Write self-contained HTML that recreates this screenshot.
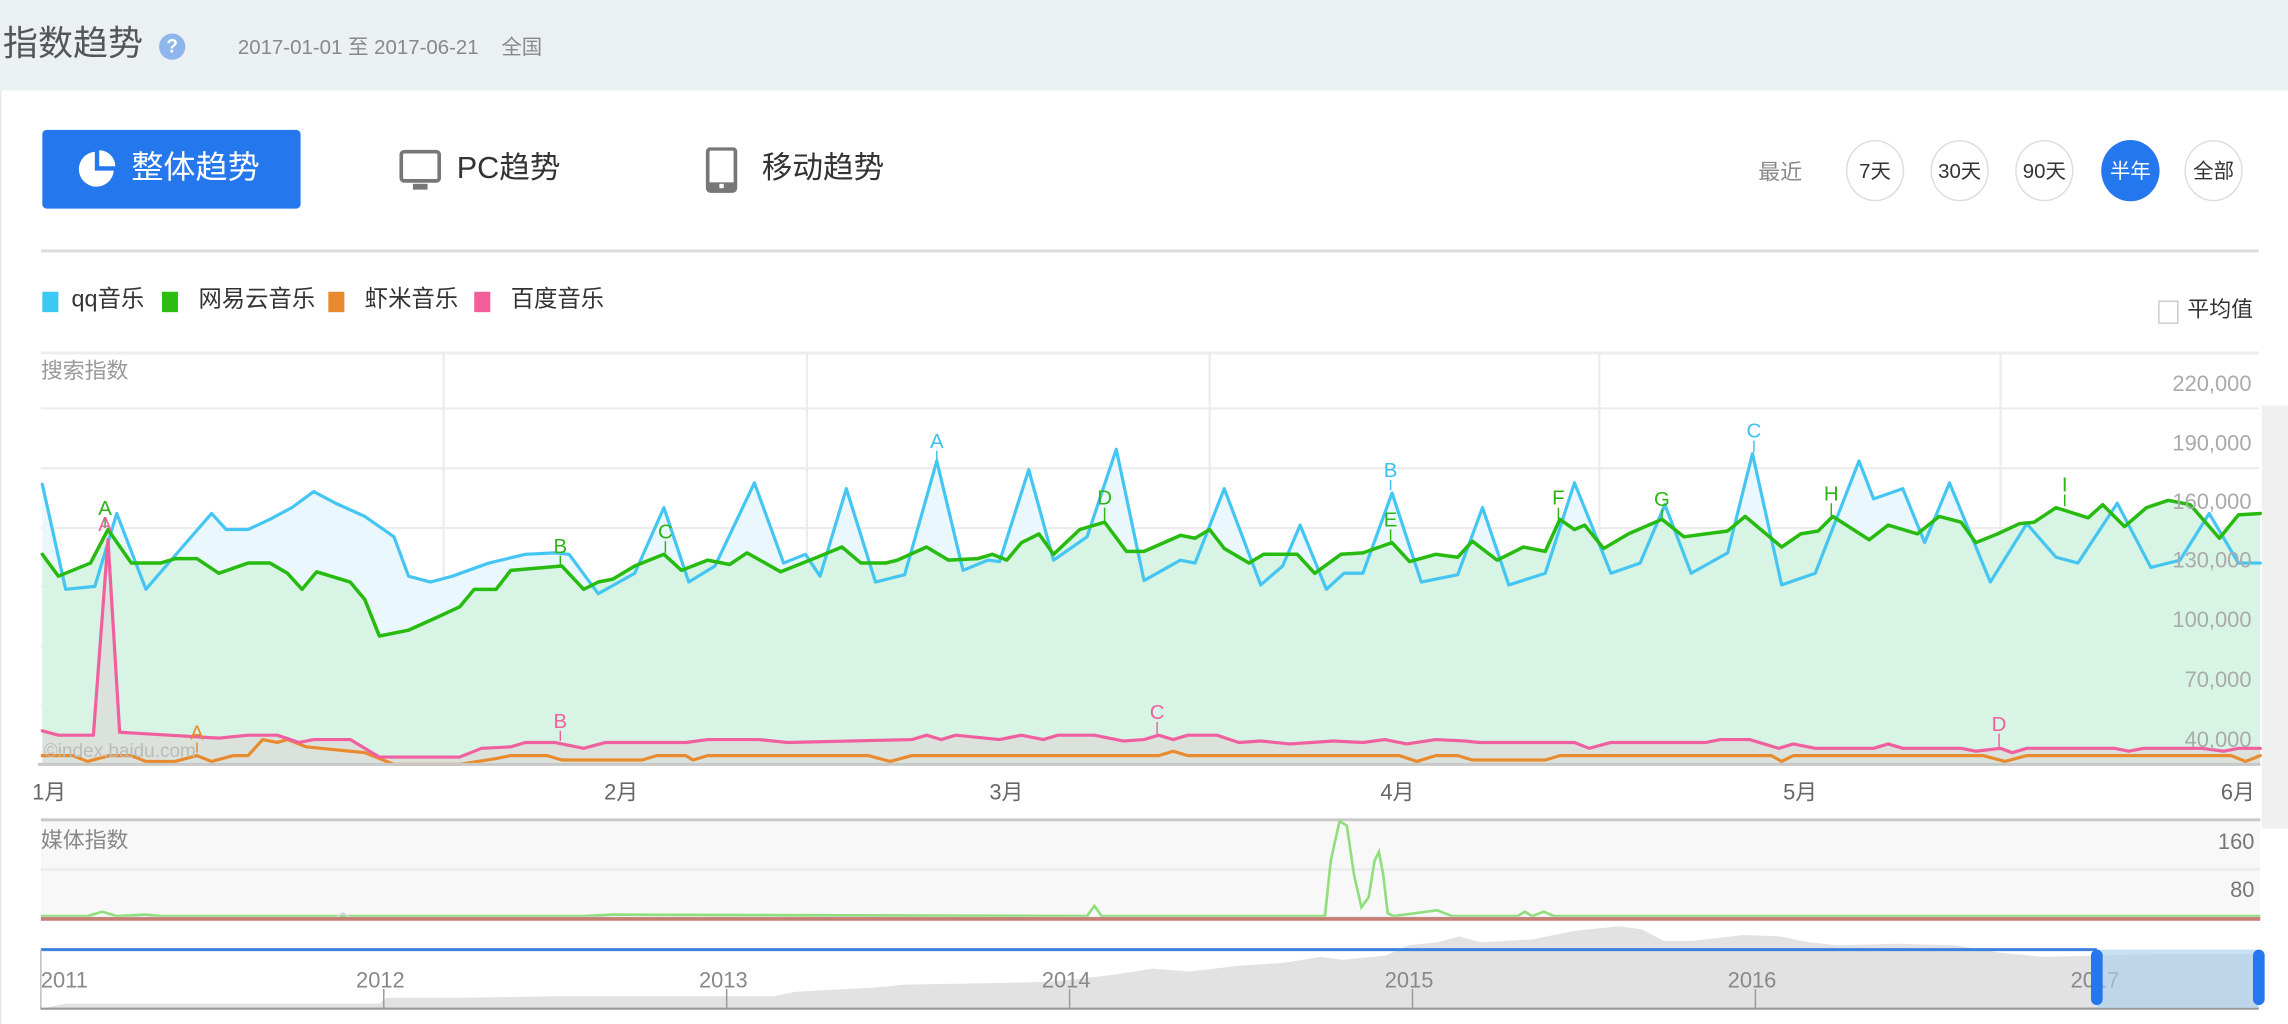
<!DOCTYPE html>
<html><head><meta charset="utf-8">
<style>
html,body{margin:0;padding:0;background:#fff;overflow:hidden}
body{width:2288px;height:1024px;position:relative}
#c{position:absolute;left:0;top:0;width:1568px;height:702px;transform:scale(1.45918,1.4587);transform-origin:0 0;font-family:"Liberation Sans","Noto Sans CJK SC",sans-serif;}
.t{position:absolute;white-space:nowrap;line-height:1}
.circ{position:absolute;width:40px;height:42px;border:1px solid #ddd;border-radius:50%;box-sizing:border-box;text-align:center;line-height:40px;font-size:14px;color:#333;top:96px;background:#fff}
</style></head><body>
<div id="c">
<div style="position:absolute;left:0;top:0;width:1568px;height:62px;background:#ebf0f3"></div>
<div style="position:absolute;left:0;top:62px;width:1px;height:640px;background:#e6eaec"></div>
<div class="t" style="left:2px;top:19px;font-size:24px;color:#555">指数趋势</div>
<div style="position:absolute;left:109px;top:23px;width:18px;height:18px;border-radius:50%;background:#8fb6ec;color:#fff;font-size:13px;font-weight:bold;text-align:center;line-height:18px">?</div>
<div class="t" style="left:163px;top:25px;font-size:14px;color:#888">2017-01-01 至 2017-06-21 &nbsp;&nbsp;&nbsp;全国</div>

<div style="position:absolute;left:29px;top:89px;width:177px;height:54px;background:#2577ee;border-radius:3px"></div>
<svg style="position:absolute;left:52px;top:102px" width="28" height="28" viewBox="0 0 28 28"><path d="M13 2 A12 12 0 1 0 26 15 L13 15 Z" fill="#fff"/><path d="M16 1 L16 12 L27 12 A11 11 0 0 0 16 1Z" fill="#fff"/></svg>
<div class="t" style="left:90px;top:104px;font-size:22px;color:#fff">整体趋势</div>
<svg style="position:absolute;left:273px;top:102px" width="30" height="30" viewBox="0 0 30 30"><rect x="2" y="2" width="26" height="20" rx="2" fill="none" stroke="#777" stroke-width="2.5"/><rect x="10" y="24" width="10" height="4" fill="#777"/></svg>
<div class="t" style="left:313px;top:105px;font-size:21px;color:#333">PC趋势</div>
<svg style="position:absolute;left:483px;top:101px" width="24" height="32" viewBox="0 0 24 32"><rect x="2" y="1" width="19" height="29" rx="2" fill="none" stroke="#777" stroke-width="2.5"/><rect x="2" y="24" width="19" height="6" fill="#777"/><rect x="10" y="25" width="3" height="3" fill="#fff"/></svg>
<div class="t" style="left:522px;top:105px;font-size:21px;color:#333">移动趋势</div>

<div class="t" style="left:1205px;top:111px;font-size:15px;color:#888">最近</div>
<div class="circ" style="left:1265px">7天</div>
<div class="circ" style="left:1323px">30天</div>
<div class="circ" style="left:1381px">90天</div>
<div class="circ" style="left:1440px;background:#2577ee;border-color:#2577ee;color:#fff">半年</div>
<div class="circ" style="left:1497px">全部</div>

<div style="position:absolute;left:28px;top:171px;width:1520px;height:2px;background:#dddddd"></div>

<div style="position:absolute;left:29px;top:200px;width:11px;height:14px;background:#3cc8f4"></div>
<div class="t" style="left:49px;top:198px;font-size:16px;color:#333">qq音乐</div>
<div style="position:absolute;left:111px;top:200px;width:11px;height:14px;background:#2cbe12"></div>
<div class="t" style="left:136px;top:198px;font-size:16px;color:#333">网易云音乐</div>
<div style="position:absolute;left:225px;top:200px;width:11px;height:14px;background:#e88b2e"></div>
<div class="t" style="left:250px;top:198px;font-size:16px;color:#333">虾米音乐</div>
<div style="position:absolute;left:325px;top:200px;width:11px;height:14px;background:#f25e9c"></div>
<div class="t" style="left:350px;top:198px;font-size:16px;color:#333">百度音乐</div>

<div style="position:absolute;left:1479px;top:206px;width:12px;height:14px;border:1px solid #ccc;background:#fff"></div>
<div class="t" style="left:1499px;top:205px;font-size:15px;color:#333">平均值</div>

<svg style="position:absolute;left:0;top:0" width="1568" height="702" viewBox="0 0 1568 702">
<rect x="1550" y="278" width="18" height="290" fill="#f0f0f0"/>
<line x1="28" y1="242" x2="1548" y2="242" stroke="#eeeeee" stroke-width="2"/>
<g stroke="#ececec" stroke-width="1.5">
<line x1="28" y1="280" x2="1548" y2="280"/><line x1="28" y1="321" x2="1548" y2="321"/><line x1="28" y1="362" x2="1548" y2="362"/><line x1="28" y1="402" x2="1548" y2="402"/><line x1="28" y1="443" x2="1548" y2="443"/><line x1="28" y1="484" x2="1548" y2="484"/>
<line x1="304" y1="242" x2="304" y2="524"/><line x1="553" y1="242" x2="553" y2="524"/><line x1="829" y1="242" x2="829" y2="524"/><line x1="1096" y1="242" x2="1096" y2="524"/><line x1="1371" y1="242" x2="1371" y2="524"/>
</g>
<polygon fill="#eaf8fd" points="29,524 29,332 45,404 65,402 80,352 100,404 125,375 145,352 155,363 170,363 185,356 200,348 215,337 230,345 250,354 270,368 280,395 295,399 310,395 335,386 360,380 380,379 390,380 410,407 435,393 455,348 472,399 490,388 517,331 537,386 552,380 562,395 580,335 600,399 620,394 642,316 660,391 677,384 685,385 705,322 722,384 745,368 765,308 784,398 809,384 819,386 839,335 864,401 879,388 891,360 909,404 921,393 934,393 954,338 974,399 999,394 1016,348 1034,401 1059,393 1079,331 1104,393 1124,386 1141,346 1159,393 1184,379 1201,311 1221,401 1244,393 1274,316 1284,342 1304,335 1319,372 1336,331 1364,399 1389,359 1409,382 1424,386 1451,345 1474,389 1494,384 1514,352 1534,386 1549,386 1549,524"/>
<polygon fill="#d6f3e3" fill-opacity="0.95" points="29,524 29,380 40,395 62,386 74,363 90,386 110,386 120,383 135,383 150,393 170,386 185,386 197,393 207,404 217,392 240,399 250,411 260,436 280,432 300,423 315,416 325,404 340,404 350,391 385,388 400,404 410,399 420,397 435,388 455,380 467,391 485,384 500,387 512,379 535,392 560,382 577,375 590,386 607,386 615,384 635,375 650,384 670,383 680,380 690,384 700,372 712,366 722,380 740,363 757,358 772,378 784,378 809,367 819,369 829,363 839,376 856,386 866,380 889,380 901,393 919,380 934,379 954,372 966,385 984,380 999,382 1009,371 1026,384 1044,375 1059,378 1069,356 1079,363 1086,360 1099,376 1116,366 1139,356 1154,368 1169,366 1184,364 1196,354 1221,375 1234,366 1246,364 1256,354 1281,370 1294,360 1314,366 1329,354 1344,358 1354,372 1369,366 1384,359 1394,358 1409,348 1431,355 1441,346 1456,361 1471,348 1486,343 1501,346 1521,369 1534,353 1549,352 1549,524"/>
<polygon fill="#dbe2dc" points="29,524 29,501 40,504 64,504 74,370 82,502 150,506 170,504 190,504 205,509 215,507 240,507 260,519 315,519 330,513 350,512 360,509 380,509 400,513 415,509 470,509 485,507 520,507 540,509 625,507 635,504 645,507 655,504 685,507 700,504 715,507 725,504 750,504 770,508 784,507 794,504 804,507 814,504 834,504 849,509 864,508 884,510 914,508 934,509 949,507 964,510 984,507 1004,508 1014,509 1079,509 1089,513 1104,509 1169,509 1179,507 1199,507 1219,513 1229,510 1244,513 1284,513 1294,510 1304,513 1344,513 1354,515 1371,513 1379,516 1389,513 1449,513 1459,515 1469,513 1509,513 1524,515 1534,513 1549,513 1549,524"/>
<g fill="none" stroke-width="2.2" stroke-linejoin="round" stroke-linecap="round">
<polyline stroke="#45c6f2" points="29,332 45,404 65,402 80,352 100,404 125,375 145,352 155,363 170,363 185,356 200,348 215,337 230,345 250,354 270,368 280,395 295,399 310,395 335,386 360,380 380,379 390,380 410,407 435,393 455,348 472,399 490,388 517,331 537,386 552,380 562,395 580,335 600,399 620,394 642,316 660,391 677,384 685,385 705,322 722,384 745,368 765,308 784,398 809,384 819,386 839,335 864,401 879,388 891,360 909,404 921,393 934,393 954,338 974,399 999,394 1016,348 1034,401 1059,393 1079,331 1104,393 1124,386 1141,346 1159,393 1184,379 1201,311 1221,401 1244,393 1274,316 1284,342 1304,335 1319,372 1336,331 1364,399 1389,359 1409,382 1424,386 1451,345 1474,389 1494,384 1514,352 1534,386 1549,386"/>
<polyline stroke="#e88b2e" points="29,518 50,518 60,522 75,518 90,518 100,522 120,522 135,518 145,522 160,518 170,518 180,507 190,509 197,507 210,512 220,513 240,515 250,516 270,524 315,524 340,520 350,518 375,518 385,521 440,521 450,518 470,518 475,521 485,518 595,518 610,522 625,518 794,518 804,515 814,518 959,518 971,522 984,518 999,518 1009,521 1059,521 1069,518 1214,518 1221,522 1229,518 1359,518 1374,522 1389,518 1529,518 1539,522 1549,518"/>
<polyline stroke="#f0609f" points="29,501 40,504 64,504 74,370 82,502 150,506 170,504 190,504 205,509 215,507 240,507 260,519 315,519 330,513 350,512 360,509 380,509 400,513 415,509 470,509 485,507 520,507 540,509 625,507 635,504 645,507 655,504 685,507 700,504 715,507 725,504 750,504 770,508 784,507 794,504 804,507 814,504 834,504 849,509 864,508 884,510 914,508 934,509 949,507 964,510 984,507 1004,508 1014,509 1079,509 1089,513 1104,509 1169,509 1179,507 1199,507 1219,513 1229,510 1244,513 1284,513 1294,510 1304,513 1344,513 1354,515 1371,513 1379,516 1389,513 1449,513 1459,515 1469,513 1509,513 1524,515 1534,513 1549,513"/>
<polyline stroke="#27bb10" stroke-width="2.4" points="29,380 40,395 62,386 74,363 90,386 110,386 120,383 135,383 150,393 170,386 185,386 197,393 207,404 217,392 240,399 250,411 260,436 280,432 300,423 315,416 325,404 340,404 350,391 385,388 400,404 410,399 420,397 435,388 455,380 467,391 485,384 500,387 512,379 535,392 560,382 577,375 590,386 607,386 615,384 635,375 650,384 670,383 680,380 690,384 700,372 712,366 722,380 740,363 757,358 772,378 784,378 809,367 819,369 829,363 839,376 856,386 866,380 889,380 901,393 919,380 934,379 954,372 966,385 984,380 999,382 1009,371 1026,384 1044,375 1059,378 1069,356 1079,363 1086,360 1099,376 1116,366 1139,356 1154,368 1169,366 1184,364 1196,354 1221,375 1234,366 1246,364 1256,354 1281,370 1294,360 1314,366 1329,354 1344,358 1354,372 1369,366 1384,359 1394,358 1409,348 1431,355 1441,346 1456,361 1471,348 1486,343 1501,346 1521,369 1534,353 1549,352"/>
</g>
<line x1="26" y1="524" x2="1549" y2="524" stroke="#c8c8c8" stroke-width="2"/>
<g font-family="Liberation Sans, sans-serif" font-size="14" text-anchor="middle">
<g fill="#2cb514" stroke="#2cb514" stroke-width="1">
<text x="72" y="353" stroke="none">A</text><line x1="72" y1="355" x2="72" y2="362"/>
<text x="384" y="379" stroke="none">B</text><line x1="384" y1="381" x2="384" y2="388"/>
<text x="456" y="369" stroke="none">C</text><line x1="456" y1="371" x2="456" y2="379"/>
<text x="757" y="346" stroke="none">D</text><line x1="757" y1="348" x2="757" y2="357"/>
<text x="953" y="361" stroke="none">E</text><line x1="953" y1="363" x2="953" y2="371"/>
<text x="1068" y="346" stroke="none">F</text><line x1="1068" y1="348" x2="1068" y2="356"/>
<text x="1139" y="347" stroke="none">G</text><line x1="1139" y1="349" x2="1139" y2="356"/>
<text x="1255" y="343" stroke="none">H</text><line x1="1255" y1="345" x2="1255" y2="354"/>
<text x="1415" y="337" stroke="none">I</text><line x1="1415" y1="339" x2="1415" y2="347"/>
</g>
<g fill="#3bbfef" stroke="#3bbfef" stroke-width="1">
<text x="642" y="307" stroke="none">A</text><line x1="642" y1="309" x2="642" y2="316"/>
<text x="953" y="327" stroke="none">B</text><line x1="953" y1="329" x2="953" y2="336"/>
<text x="1202" y="300" stroke="none">C</text><line x1="1202" y1="302" x2="1202" y2="310"/>
</g>
<g fill="#f0609f" stroke="#f0609f" stroke-width="1">
<text x="72" y="364" stroke="none">A</text>
<text x="384" y="499" stroke="none">B</text><line x1="384" y1="501" x2="384" y2="508"/>
<text x="793" y="493" stroke="none">C</text><line x1="793" y1="495" x2="793" y2="503"/>
<text x="1370" y="501" stroke="none">D</text><line x1="1370" y1="503" x2="1370" y2="512"/>
</g>
<g fill="#e88b2e" stroke="#e88b2e"><text x="135" y="507" stroke="none">A</text><line x1="135" y1="509" x2="135" y2="516"/></g>
</g>
<text x="30" y="519" font-family="Liberation Sans, sans-serif" font-size="13" fill="#bbb">©index.baidu.com</text>
<g font-family="Liberation Sans, sans-serif" font-size="15" fill="#aaa" text-anchor="end">
<text x="1543" y="268">220,000</text><text x="1543" y="309">190,000</text><text x="1543" y="349">160,000</text><text x="1543" y="389">130,000</text><text x="1543" y="430">100,000</text><text x="1543" y="471">70,000</text><text x="1543" y="512">40,000</text>
</g>
<g font-family="Liberation Sans, Noto Sans CJK SC, sans-serif" font-size="15" fill="#666">
<text x="22" y="548">1月</text><text x="414" y="548">2月</text><text x="678" y="548">3月</text><text x="946" y="548">4月</text><text x="1222" y="548">5月</text><text x="1522" y="548">6月</text>
</g>
<rect x="28" y="562" width="1521" height="68" fill="#f8f8f8"/>
<line x1="28" y1="562" x2="1549" y2="562" stroke="#c8c8c8" stroke-width="2"/>
<line x1="28" y1="596" x2="1549" y2="596" stroke="#eaeaea" stroke-width="1.5"/>
<g font-family="Liberation Sans, sans-serif" font-size="15" fill="#777" text-anchor="end"><text x="1545" y="582">160</text><text x="1545" y="615">80</text></g>
<polyline fill="none" stroke="#8fdf7c" stroke-width="1.8" points="28,628 60,628 70,625 80,628 100,627 110,628 400,628 420,627 745,628 750,621 755,628 900,628 908,628 912,590 918,563 923,566 928,600 933,622 938,615 942,590 945,584 948,600 951,626 955,628 970,626 985,624 995,628 1040,628 1045,625 1050,628 1058,625 1065,628 1549,628"/>
<polyline fill="none" stroke="#cfd8e8" stroke-width="1.2" points="28,629 230,629 235,626 240,629 1549,629"/>
<line x1="28" y1="630" x2="1549" y2="630" stroke="#c77f72" stroke-width="2.5"/>
<polygon fill="#e2e2e2" points="30,691 45,688 260,688 265,684 320,684 380,683 530,683 545,680 560,679 600,677 620,675 680,674 720,673 740,671 765,668 790,664 815,666 850,662 880,660 905,656 920,658 950,655 965,648 985,646 1000,642 1015,646 1050,644 1080,638 1110,635 1125,637 1140,645 1160,645 1195,641 1220,642 1240,646 1260,648 1300,647 1340,648 1370,653 1400,656 1440,655 1480,654 1520,654 1548,654 1548,691"/>
<line x1="28" y1="651" x2="1437" y2="651" stroke="#3b80de" stroke-width="2"/>
<line x1="28" y1="651" x2="28" y2="692" stroke="#bbb"/>
<line x1="28" y1="691.5" x2="1548" y2="691.5" stroke="#999" stroke-width="1.5"/>
<g stroke="#999" stroke-width="1"><line x1="263" y1="678" x2="263" y2="691"/><line x1="498" y1="678" x2="498" y2="691"/><line x1="733" y1="678" x2="733" y2="691"/><line x1="968" y1="678" x2="968" y2="691"/><line x1="1203" y1="678" x2="1203" y2="691"/></g>
<g font-family="Liberation Sans, sans-serif" font-size="15" fill="#888">
<text x="28" y="677">2011</text><text x="244" y="677">2012</text><text x="479" y="677">2013</text><text x="714" y="677">2014</text><text x="949" y="677">2015</text><text x="1184" y="677">2016</text><text x="1419" y="677">2017</text>
</g>
<rect x="1437" y="651" width="111" height="40" fill="#a9cfee" fill-opacity="0.65"/>
<rect x="1433" y="651" width="8" height="38" rx="4" fill="#2577ee"/>
<rect x="1544" y="651" width="8" height="38" rx="4" fill="#2577ee"/>
</svg>
<div class="t" style="left:28px;top:247px;font-size:15px;color:#999">搜索指数</div>
<div class="t" style="left:28px;top:569px;font-size:15px;color:#888">媒体指数</div>
</div>
</body></html>
